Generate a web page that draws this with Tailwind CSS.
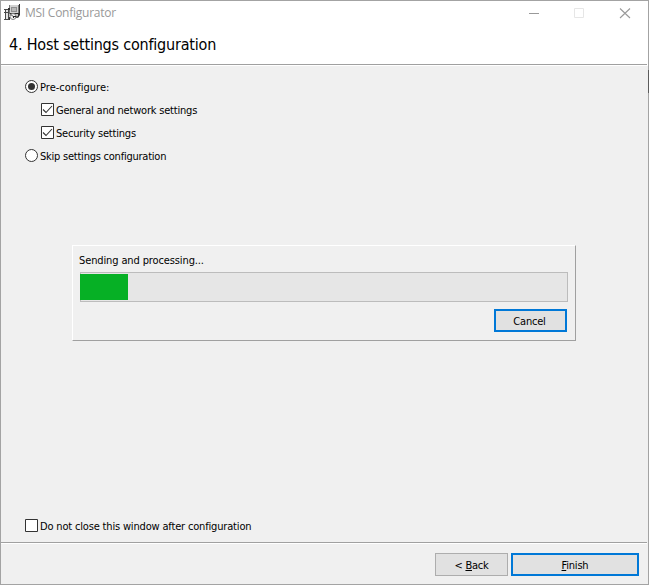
<!DOCTYPE html>
<html lang="en"><head><meta charset="utf-8"><title>MSI Configurator</title>
<script src="https://cdn.jsdelivr.net/npm/@tailwindcss/browser@4"></script></head>
<body class="w-[649px] h-[585px] overflow-hidden">
<div class="relative flex flex-col w-[649px] h-[585px] border border-[#a3a3a3] bg-[#f0f0f0] font-['DejaVu_Sans_Condensed','Noto_Sans',sans-serif] text-[11px] leading-[13px] text-black">
  <header class="h-[65px] bg-white shrink-0 flex flex-col">
    <div class="flex h-[25px] items-start">
      <svg class="ml-[3px] mt-[3px] w-4 h-[17px]" viewBox="0 0 16 17">
        <path fill="#777" d="M5 1h10v9H5z"/><path fill="#d2d2d2" d="M6 1h8v8H6z"/><path fill="#8f8f8f" d="M7 3h6v5H7z"/><path fill="#b8b8b8" d="M8 4h4v3H8z"/><path fill="#2c2c2c" d="M15 0h1v11l-2 3h-1v-3h1V9h1zM6 9h8v1H6z"/><path fill="#c8c8c8" d="M5 10h9v2H5z"/><path fill="#555" d="M11 12h3v2h-3z"/>
        <path fill="#4a4a4a" d="M0 5h5v1H0zM1 6h1v10H1zM4 6h1v10H4zM0 8h5v1H0zM0 15h5v1H0z"/><path fill="#e4e4e4" d="M2 6h2v2H2zM2 9h2v6H2z"/><path fill="#333" d="M4 4h2v2H4zM5 13h1v3H5z"/>
        <circle cx="9" cy="12.5" r="3" fill="#f2f2f2" stroke="#777" stroke-width=".9"/><path d="M7 10.5l2 2" stroke="#333"/><path fill="#222" d="M9 12h1v2H9zM10 12h2v1h-2z"/>
      </svg>
      <span class="ml-[5px] mt-[4px] font-['Open_Sans',sans-serif] text-[12px] leading-4 text-[#999] whitespace-nowrap tracking-[-0.25px]">MSI Configurator</span>
      <svg class="ml-auto mr-[17px] mt-[7px] w-[102px] h-[11px]" viewBox="0 0 102 11" fill="none"><path d="M0 5.5h10" stroke="#999"/><path d="M45.5 .5h9v9h-9z" stroke="#e6e6e6"/><path d="M91 .5l10 9.5M101 .5l-10 9.5" stroke="#999" stroke-width="1.1"/></svg>
    </div>
    <h1 class="ml-[8px] mt-[9px] text-[16px] leading-5 whitespace-nowrap tracking-[-0.2px]">4. Host settings configuration</h1>
    <div class="mt-auto h-[2px] w-[646px] border-t border-[#a0a0a0]"></div>
  </header>
  <main class="flex flex-col h-[476px] shrink-0">
    <div class="flex flex-col gap-[10px] mt-[14px] ml-[24px] whitespace-nowrap">
      <label class="flex h-[13px] items-center gap-[2px]"><svg class="size-[13px]" viewBox="0 0 13 13"><circle cx="6.5" cy="6.5" r="6" fill="#fff" stroke="#333"/><circle cx="6.5" cy="6.5" r="3.5" fill="#333"/></svg><span class="pt-px tracking-[0.02px]">Pre-configure:</span></label>
      <label class="flex h-[13px] items-center gap-[2px] ml-4"><svg class="size-[13px]" viewBox="0 0 13 13"><path d="M.5 .5h12v12H.5z" fill="#fff" stroke="#333"/><path d="M2 6.5l3 3 6-6.5" fill="none" stroke="#333" stroke-width="1.1"/></svg><span class="pt-px tracking-[-0.2px]">General and network settings</span></label>
      <label class="flex h-[13px] items-center gap-[2px] ml-4"><svg class="size-[13px]" viewBox="0 0 13 13"><path d="M.5 .5h12v12H.5z" fill="#fff" stroke="#333"/><path d="M2 6.5l3 3 6-6.5" fill="none" stroke="#333" stroke-width="1.1"/></svg><span class="pt-px tracking-[-0.2px]">Security settings</span></label>
      <label class="flex h-[13px] items-center gap-[2px]"><svg class="size-[13px]" viewBox="0 0 13 13"><circle cx="6.5" cy="6.5" r="6" fill="#fff" stroke="#333"/></svg><span class="pt-px tracking-[-0.23px]">Skip settings configuration</span></label>
    </div>
    <section class="mt-[83px] ml-[71px] w-[504px] h-[96px] border border-t-white border-l-white border-r-[#a0a0a0] border-b-[#a0a0a0] px-[7px]">
      <p class="mt-[8px] h-[13px] -ml-px whitespace-nowrap tracking-[-0.12px]">Sending and processing...</p>
      <div class="mt-[5px] h-[30px] border border-[#bcbcbc] bg-[#e6e6e6] py-px"><div class="-ml-px w-[48px] h-[26px] bg-[#06b025]"></div></div>
      <button class="block ml-[414px] mt-[7px] w-[73px] h-[23px] border-2 border-[#0078d7] bg-[#e1e1e1] pr-[2px] pt-px tracking-[-0.2px]">Cancel</button>
    </section>
    <label class="flex h-[13px] items-center gap-[2px] ml-[24px] mt-auto mb-[10px] whitespace-nowrap"><svg class="size-[13px]" viewBox="0 0 13 13"><path d="M.5 .5h12v12H.5z" fill="#fff" stroke="#333"/></svg><span class="pt-px tracking-[-0.17px]">Do not close this window after configuration</span></label>
  </main>
  <footer class="mr-px h-[41px] border-t border-[#a0a0a0]"><div class="border-t border-white flex gap-[3px] pl-[434px] pt-[9px]">
    <button class="w-[73px] h-[23px] shrink-0 border border-[#adadad] bg-[#e1e1e1] pt-px tracking-[-0.25px]">&lt; <u class="underline-offset-1">B</u>ack</button>
    <button class="w-[128px] h-[23px] shrink-0 border-2 border-[#0078d7] bg-[#e1e1e1] pt-px tracking-[-0.2px]"><u class="underline-offset-1">F</u>inish</button>
  </div></footer>
  <div class="absolute left-[647px] top-[69px] w-px h-[23px] bg-[#5c5c5c]"></div>
</div>
</body></html>
